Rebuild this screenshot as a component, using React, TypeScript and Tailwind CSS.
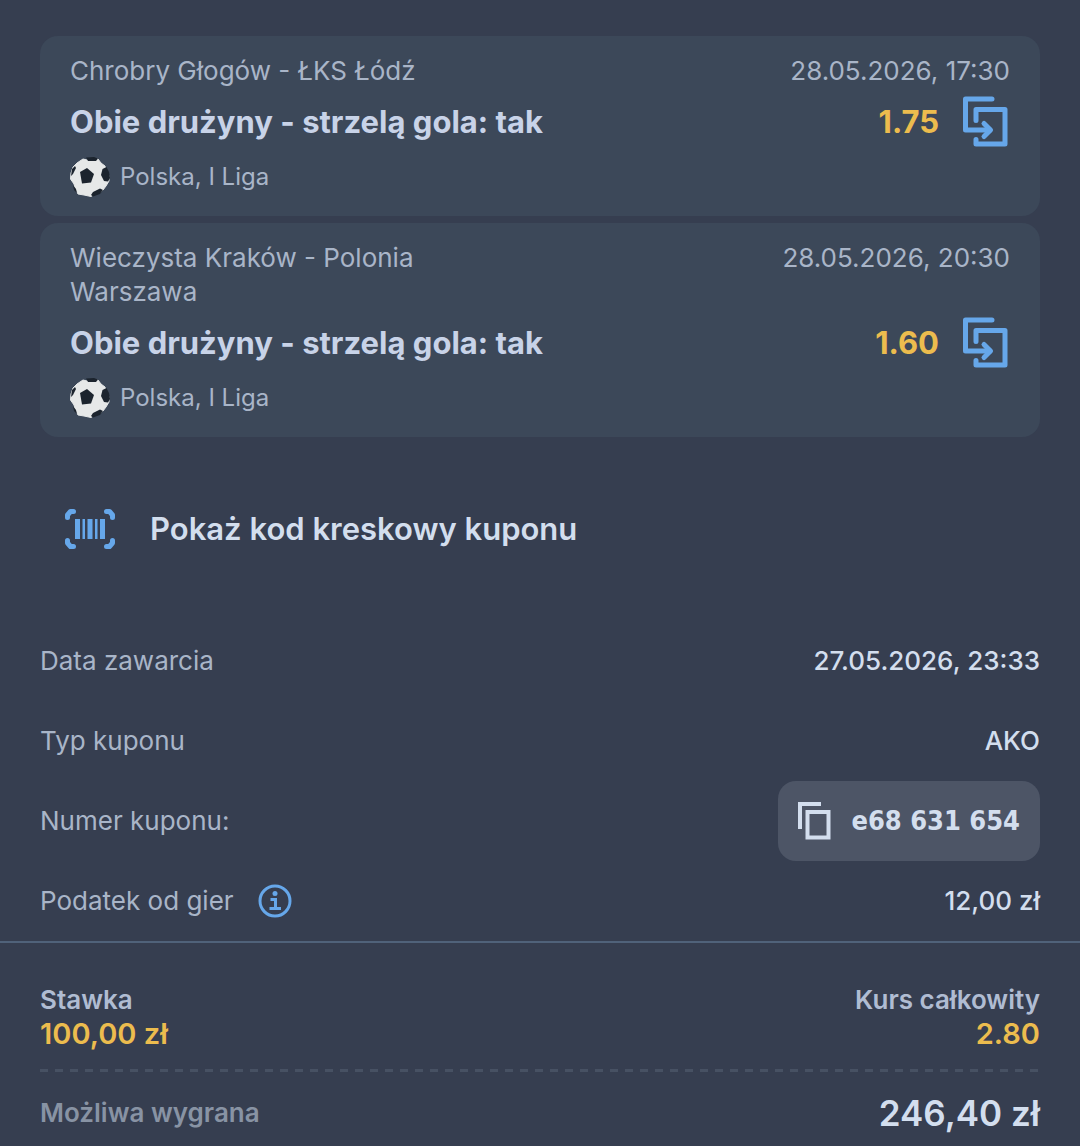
import type { ReactNode } from "react";

type Bet = {
  id: number;
  match: string;
  date: string;
  pick: string;
  odds: string;
  league: string;
};

const bets: Bet[] = [
  {
    id: 1,
    match: "Chrobry Głogów - ŁKS Łódź",
    date: "28.05.2026, 17:30",
    pick: "Obie drużyny - strzelą gola: tak",
    odds: "1.75",
    league: "Polska, I Liga",
  },
  {
    id: 2,
    match: "Wieczysta Kraków - Polonia Warszawa",
    date: "28.05.2026, 20:30",
    pick: "Obie drużyny - strzelą gola: tak",
    odds: "1.60",
    league: "Polska, I Liga",
  },
];

function CopyBetIcon() {
  return (
    <svg width="45" height="52" viewBox="0 0 45 52" fill="none" stroke="#66a7ea" strokeWidth="5" strokeLinecap="round" strokeLinejoin="round" aria-hidden="true">
      <path d="M29 3H2.500V34H27" />
      <path d="M13 24.500V13.500H42V48H13V43.500" />
      <path d="M21 27.500L27.500 34L21 40.500" />
    </svg>
  );
}

function BallIcon() {
  return (
    <svg width="40" height="40" viewBox="0 0 40 40" aria-hidden="true">
      <path
        d="M13 2L17 3L25 2.500L28 2L31 6L35 9L36 13L39 19L39 24L36 29L33 33L30 36L25 37L21 39.500L14 38L8 37L5 31L4 27L0.500 22L1 16L3 10L7 6Z"
        fill="#e6e8e8"
        stroke="#e6e8e8"
        strokeWidth="1"
        strokeLinejoin="round"
      />
      <g fill="#1c242e">
        <path d="M10 15L17 11L24 17L21 25.500L12 26.500Z" />
        <path d="M16 0.500L24 0L28 1.500L26 4L18 4Z" />
        <path d="M32.500 12L36.500 10L39 15L40 21L38 24.500L34 24L31 18Z" />
        <path d="M23 35L30 31.500L33 33L30 37L23 39.500L21 38Z" />
        <path d="M2 12L5 9L6 11L3 17L1 19Z" />
        <path d="M3 28L6 32L7 36L4 33Z" />
      </g>
    </svg>
  );
}

function BarcodeIcon() {
  return (
    <svg width="50" height="40" viewBox="0 0 50 40" fill="#66a7ea" aria-hidden="true">
      <g fill="none" stroke="#66a7ea" strokeWidth="5" strokeLinecap="round" strokeLinejoin="round">
        <path d="M2.500 8.500V6L5.500 2.500H8.500" />
        <path d="M41.500 2.500H44.500L47.500 6V8.500" />
        <path d="M2.500 31.500V34L5.500 37.500H8.500" />
        <path d="M41.500 37.500H44.500L47.500 34V31.500" />
      </g>
      <rect x="10" y="10" width="5" height="20" />
      <rect x="17.500" y="10" width="2.500" height="20" />
      <rect x="22.500" y="10" width="5" height="20" />
      <rect x="30" y="10" width="2.500" height="20" />
      <rect x="35" y="10" width="5" height="20" />
    </svg>
  );
}

function CopyIcon() {
  return (
    <svg width="33" height="38" viewBox="0 0 33 38" fill="none" stroke="#d3deee" strokeWidth="4" aria-hidden="true">
      <path d="M23 2H2V27" />
      <path d="M9.500 10H30.500V35.500H9.500Z" />
    </svg>
  );
}

function InfoIcon() {
  return (
    <svg width="34" height="34" viewBox="0 0 34 34" fill="none" stroke="#66a7ea" strokeWidth="3" aria-hidden="true">
      <circle cx="17" cy="17" r="15" />
      <circle cx="17" cy="9.500" r="2.500" fill="#66a7ea" stroke="none" />
      <path d="M12.500 15.500H17.500V24M11.500 24.500H23" />
    </svg>
  );
}

function BetCard({ bet }: { bet: Bet }) {
  return (
    <li className="rounded-[18px] bg-[#3c4859] px-[30px] py-[18px]">
      <div className="flex items-start justify-between text-[26px] leading-[34px] text-[#a9b5c8]">
        <p className="max-w-[400px]">{bet.match}</p>
        <time>{bet.date}</time>
      </div>
      <div className="my-2 flex h-[52px] items-center">
        <h2 className="flex-1 text-[31px] font-bold text-[#c8d3e8]">{bet.pick}</h2>
        <span className="mr-6 text-[31px] font-bold text-[#ecbc4e]">{bet.odds}</span>
        <button type="button" aria-label="Kopiuj zdarzenie" className="mr-0.5">
          <CopyBetIcon />
        </button>
      </div>
      <div className="flex items-center gap-2.5 text-[24px] leading-[42px] text-[#a9b5c8]">
        <BallIcon />
        <span>{bet.league}</span>
      </div>
    </li>
  );
}

function DetailRow({ label, children }: { label: ReactNode; children: ReactNode }) {
  return (
    <div className="flex h-20 items-center justify-between">
      <dt className="flex items-center gap-6 text-[#a9b5c8]">{label}</dt>
      <dd className="font-medium text-[#d3deee]">{children}</dd>
    </div>
  );
}

export default function App() {
  return (
    <main className="min-h-screen bg-[#363e50] pt-9 font-['Inter',sans-serif] text-[26px] leading-[34px]">
      <ul className="mx-10 flex flex-col gap-[7px]">
        {bets.map((bet) => (
          <BetCard key={bet.id} bet={bet} />
        ))}
      </ul>

      <button type="button" className="mx-10 my-[54px] flex h-[76px] items-center gap-[35px] px-[25px] text-[31px] font-semibold text-[#d3deee]">
        <BarcodeIcon />
        Pokaż kod kreskowy kuponu
      </button>

      <dl className="px-10">
        <DetailRow label="Data zawarcia">27.05.2026, 23:33</DetailRow>
        <DetailRow label="Typ kuponu">AKO</DetailRow>
        <DetailRow label="Numer kuponu:">
          <button
            type="button"
            className="flex h-20 items-center gap-5 rounded-[18px] bg-[#4d5566] px-5 font-['DejaVu_Sans_Condensed','DejaVu_Sans',sans-serif] text-[27px] font-bold"
          >
            <CopyIcon />
            e68 631 654
          </button>
        </DetailRow>
        <DetailRow
          label={
            <>
              Podatek od gier
              <button type="button" aria-label="Informacje o podatku">
                <InfoIcon />
              </button>
            </>
          }
        >
          12,00 zł
        </DetailRow>
      </dl>

      <footer className="border-t-2 border-[#50627a] px-10 pt-10">
        <dl className="flex justify-between font-semibold">
          <div>
            <dt className="text-[#b0bcd2]">Stawka</dt>
            <dd className="text-[29px] text-[#ecbc4e]">100,00 zł</dd>
          </div>
          <div className="text-right">
            <dt className="text-[#b0bcd2]">Kurs całkowity</dt>
            <dd className="text-[29px] text-[#ecbc4e]">2.80</dd>
          </div>
        </dl>
        <div className="mt-[18px] h-[3px] bg-[repeating-linear-gradient(to_right,#475163_0_8px,transparent_8px_15px)]" />
        <dl className="mt-5 flex h-[42px] items-center justify-between font-semibold">
          <dt className="text-[#8893a4]">Możliwa wygrana</dt>
          <dd className="text-[35px] text-[#d3deee]">246,40 zł</dd>
        </dl>
      </footer>
    </main>
  );
}
